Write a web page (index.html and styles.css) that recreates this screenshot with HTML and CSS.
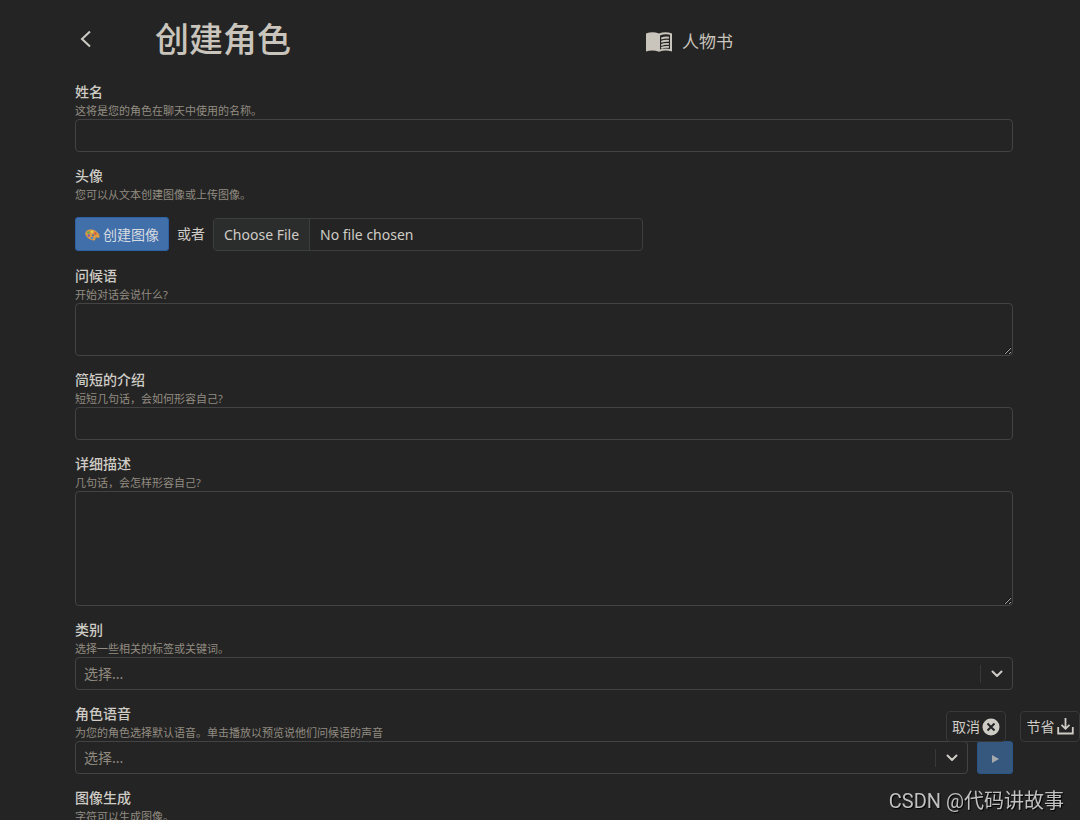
FILE: index.html
```html
<!DOCTYPE html>
<html lang="zh-CN">
<head>
<meta charset="utf-8">
<meta name="viewport" content="width=device-width, initial-scale=1">
<title>创建角色</title>
<link rel="stylesheet" href="styles.css">
</head>
<body>
<main class="page">
  <header class="header">
    <div class="header-main">
      <button class="back" type="button" aria-label="返回">
        <svg width="12" height="18" viewBox="0 0 12 18" fill="none" stroke="currentColor" stroke-width="2"><path d="M10 1.500 2 9l8 7.500"/></svg>
      </button>
      <h1 class="title">创建角色</h1>
    </div>
    <a class="book" href="#book">
      <svg width="26" height="20" viewBox="0 0 26 20"><path fill="currentColor" d="M0 1.500Q6.500-1.200 13 1.500 19.500-1.200 26 1.500V19.500Q19.500 17.200 13 19.800 6.500 17.200 0 19.500Z"/><path fill="#242424" d="M14 3.500Q19 1.300 24 2.700V17Q19 15.600 14 17.600Z"/><path fill="none" stroke="currentColor" stroke-width="1.900" d="M15.200 6.700Q19 5 22.900 5.700M15.200 9.900Q19 8.200 22.900 8.900M15.200 13.100Q19 11.400 22.900 12.100M15.200 16Q19 14.400 22.900 15"/></svg>
      <span>人物书</span>
    </a>
  </header>

  <form class="form">
    <div class="field">
      <label class="label" for="name">姓名</label>
      <p class="hint">这将是您的角色在聊天中使用的名称。</p>
      <input class="control" id="name" type="text">
    </div>

    <div class="field">
      <label class="label" for="avatar">头像</label>
      <p class="hint">您可以从文本创建图像或上传图像。</p>
      <div class="avatar-row">
        <button class="create" type="button">
          <svg width="15" height="12" viewBox="0 0 15 12"><path fill="#d99a45" d="M1 2.500C3 .2 8-.2 11.500 2.500c3 2.300 4 5.500 2.500 6.200-1.200.6-2-.8-3.200 0-1 .8.300 2-1 2.600C7 12.300 2.500 9.500 1 6.800.2 5.300 0 3.700 1 2.500Z"/><circle cx="3.500" cy="3.500" r="1.300" fill="#58a84c"/><circle cx="7" cy="2.800" r="1.200" fill="#e8d34c"/><circle cx="10.300" cy="4.500" r="1.200" fill="#d9503f"/><circle cx="3.800" cy="6.500" r="1.200" fill="#8a55b5"/><circle cx="7" cy="9" r="1.200" fill="#4089cc"/><circle cx="8" cy="6.200" r="1" fill="#416fa9"/></svg>
          <span>创建图像</span>
        </button>
        <span class="or">或者</span>
        <input class="file" id="avatar" type="file">
      </div>
    </div>

    <div class="field">
      <label class="label" for="greeting">问候语</label>
      <p class="hint">开始对话会说什么?</p>
      <textarea class="control greeting" id="greeting"></textarea>
    </div>

    <div class="field">
      <label class="label" for="short">简短的介绍</label>
      <p class="hint">短短几句话，会如何形容自己?</p>
      <input class="control" id="short" type="text">
    </div>

    <div class="field">
      <label class="label" for="detail">详细描述</label>
      <p class="hint">几句话，会怎样形容自己?</p>
      <textarea class="control detail" id="detail"></textarea>
    </div>

    <div class="field">
      <label class="label" for="category">类别</label>
      <p class="hint">选择一些相关的标签或关键词。</p>
      <div class="select">
        <select class="control" id="category"><option>选择...</option></select>
        <span class="arrow"><svg width="12" height="8" viewBox="0 0 12 8" fill="none" stroke="currentColor" stroke-width="2" stroke-linecap="round" stroke-linejoin="round"><path d="m1.500 1.500 4.500 4.500 4.500-4.500"/></svg></span>
      </div>
    </div>

    <div class="field">
      <label class="label" for="voice">角色语音</label>
      <p class="hint">为您的角色选择默认语音。单击播放以预览说他们问候语的声音</p>
      <div class="voice-row">
        <div class="select">
          <select class="control" id="voice"><option>选择...</option></select>
          <span class="arrow"><svg width="12" height="8" viewBox="0 0 12 8" fill="none" stroke="currentColor" stroke-width="2" stroke-linecap="round" stroke-linejoin="round"><path d="m1.500 1.500 4.500 4.500 4.500-4.500"/></svg></span>
        </div>
        <button class="play" type="button" aria-label="播放"><svg width="8" height="8" viewBox="0 0 8 8"><path fill="currentColor" d="M1 0 8 4 1 8Z"/></svg></button>
      </div>
    </div>

    <div class="field">
      <span class="label">图像生成</span>
      <p class="hint">字符可以生成图像。</p>
    </div>
  </form>
</main>

<div class="actions">
  <button class="action" type="button"><span>取消</span><svg width="18" height="18" viewBox="0 0 18 18"><circle cx="9" cy="9" r="8.500" fill="currentColor"/><path d="m5.500 5.500 7 7m0-7-7 7" stroke="#242424" stroke-width="2"/></svg></button>
  <button class="action" type="button"><span>节省</span><svg width="17" height="17" viewBox="0 0 17 17" fill="none" stroke="currentColor" stroke-width="1.800"><path d="M8.500 0v10.500M4.500 6.800l4 4 4-4M1.200 9v6.500h14.600V9"/></svg></button>
</div>
<div class="watermark">CSDN @代码讲故事</div>
</body>
</html>
```

FILE: styles.css
```css
* {
  box-sizing: border-box;
}

body {
  margin: 0;
  background: #242424;
  color: #cfccc6;
  font-family: "Noto Sans", "Noto Sans CJK SC", sans-serif;
  font-size: 14px;
  line-height: 20px;
}

button,
input,
select,
textarea {
  margin: 0;
  font: inherit;
  color: inherit;
}

.page {
  height: 100vh;
  padding: 0 67px 0 75px;
  overflow: hidden auto;
  scrollbar-width: none;
}

.header {
  display: grid;
  grid-template-columns: 571px 1fr;
  align-items: center;
  height: 82px;
  padding-bottom: 4px;
}

.header-main {
  display: flex;
  align-items: center;
  gap: 58px;
}

.back {
  display: flex;
  padding: 0 5px;
  border: 0;
  background: none;
}

.title {
  margin: 0;
  font-size: 34px;
  font-weight: 500;
  line-height: 48px;
  color: #c9c5bc;
}

.book {
  display: flex;
  align-items: center;
  gap: 10px;
  padding-top: 6px;
  font-size: 17px;
  color: #c9c5bc;
  text-decoration: none;
}

.form {
  display: flex;
  flex-direction: column;
  gap: 14px;
}

.field {
  display: flex;
  flex-direction: column;
}

.label {
  font-weight: 500;
  line-height: 20px;
}

.hint {
  margin: 0;
  font-size: 11px;
  line-height: 17px;
  color: #928c81;
}

.control {
  display: block;
  width: 100%;
  height: 33px;
  padding: 0 8px;
  border: 1px solid #434343;
  border-radius: 4px;
  background: #242424;
}

textarea.control {
  resize: vertical;
}

textarea.greeting {
  height: 53px;
}

textarea.detail {
  height: 115px;
}

.avatar-row {
  display: flex;
  align-items: center;
  gap: 8px;
  margin: 14px 0 1px;
}

.create {
  display: flex;
  align-items: center;
  gap: 3px;
  height: 34px;
  padding: 2px 9px 0;
  border: 1px solid #2c62a5;
  border-radius: 3px;
  background: #416fa9;
  color: #d7dce2;
}

.file {
  flex: 0 1 430px;
  min-width: 0;
  height: 33px;
  border: 1px solid #3d3f3f;
  border-radius: 4px;
  line-height: 31px;
}

.file::file-selector-button {
  height: 31px;
  margin: 0 10px 0 0;
  padding: 0 10px;
  border: 0;
  border-right: 1px solid #3d3f3f;
  border-radius: 3px 0 0 3px;
  background: #2b2d2d;
  color: inherit;
  font: inherit;
}

.select {
  display: grid;
  flex: 1;
  align-items: center;
}

.select > * {
  grid-area: 1 / 1;
}

.select .control {
  appearance: none;
  color: #8f897f;
}

.arrow {
  display: flex;
  align-items: center;
  justify-content: center;
  justify-self: end;
  width: 33px;
  height: 18px;
  border-left: 1px solid #393939;
  pointer-events: none;
}

.voice-row {
  display: flex;
  gap: 9px;
}

.play {
  display: flex;
  align-items: center;
  justify-content: center;
  width: 36px;
  padding: 2px 0 0;
  border: 1px solid #2b5587;
  border-radius: 3px;
  background: #36587f;
  color: #a5a9ad;
}

.actions {
  position: fixed;
  right: 0;
  bottom: 78px;
  display: flex;
  gap: 14px;
}

.action {
  display: flex;
  align-items: center;
  justify-content: center;
  width: 60px;
  height: 31px;
  padding: 0;
  gap: 2px;
  border: 1px solid #393939;
  border-radius: 4px;
  background: #242424;
  white-space: nowrap;
}

.watermark {
  position: fixed;
  right: 16px;
  bottom: 7px;
  font-family: Roboto, "Noto Sans CJK SC", sans-serif;
  font-size: 20px;
  line-height: 24px;
  color: #c0c0c0;
  text-shadow: 1px 1px 1px #000;
}
```
